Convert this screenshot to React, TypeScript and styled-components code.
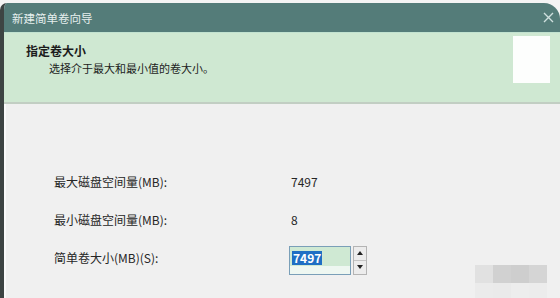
import React from "react";
import styled, { createGlobalStyle } from "styled-components";

const GlobalStyle = createGlobalStyle`
  html, body {
    margin: 0;
    padding: 0;
    background: #f4f4f4;
    font-family: "Noto Sans CJK SC", "Noto Sans", sans-serif;
  }
`;

const Screen = styled.div`
  position: relative;
  width: 560px;
  height: 298px;
  padding-top: 3px;
  box-sizing: border-box;
  overflow: hidden;
`;

const Window = styled.div`
  height: 100%;
  display: flex;
  flex-direction: column;
  border-left: 4px solid #3d4443;
  border-radius: 7px 16px 0 0;
  background: #f0f0f0;
  overflow: hidden;
`;

const TitleBar = styled.div`
  height: 29px;
  display: flex;
  align-items: center;
  justify-content: space-between;
  padding: 0 6px 0 8px;
  background: #547c79;
  color: #e6efee;
  font-size: 11.5px;
`;

const CloseIcon = styled.svg`
  width: 11px;
  height: 11px;
  margin-top: 0px;
`;

const Header = styled.div`
  height: 72px;
  display: flex;
  justify-content: space-between;
  align-items: flex-start;
  background: #cfe8d2;
  border-top: 1px solid #c2e2d0;
  border-bottom: 2px solid #c2cec3;
  box-sizing: border-box;
`;

const HeaderText = styled.div`
  padding: 10px 0 0 22px;
  color: #1c1c1c;
`;

const HeaderTitle = styled.div`
  font-size: 12px;
  font-weight: 700;
  line-height: 16px;
`;

const HeaderSub = styled.div`
  font-size: 11px;
  line-height: 16px;
  margin: 1px 0 0 23px;
`;

const Badge = styled.div`
  width: 37px;
  height: 47px;
  margin: 3px 10px 0 0;
  background: #fdfefd;
`;

const Body = styled.div`
  flex: 1;
  padding: 58px 0 0 48px;
  border-left: 2px solid #fafafa;
  display: flex;
  flex-direction: column;
`;

const Row = styled.div`
  height: 38px;
  display: flex;
  align-items: center;
  font-size: 12px;
  color: #262626;
`;

const Label = styled.div`
  width: 237px;
`;

const SpinBox = styled.div`
  display: flex;
  margin-top: 6px;
  margin-left: -2px;
`;

const InputField = styled.div`
  width: 62px;
  height: 29px;
  border: 1px solid #7a9fb8;
  background: linear-gradient(#cfe9d3 0 70%, #eef7f1 70% 100%);
  padding: 2px 0 0 2px;
  box-sizing: border-box;
`;

const Selected = styled.span`
  display: inline-block;
  background: #1f6fc4;
  color: #ffffff;
  font-size: 12px;
  font-weight: 600;
  line-height: 14px;
  padding: 0 1px;
`;

const Spinner = styled.div`
  display: flex;
  flex-direction: column;
  margin-left: 2px;
  border: 1px solid #b4b4b4;
  height: 29px;
  box-sizing: border-box;
`;

const SpinButton = styled.div`
  width: 12px;
  flex: 1;
  display: flex;
  align-items: center;
  justify-content: center;
  background: #ececec;
  & + & {
    border-top: 1px solid #c4c4c4;
  }
`;

const Mosaic = styled.div`
  position: absolute;
  right: 13px;
  bottom: 0;
  display: grid;
  grid-template-columns: repeat(4, 18px);
  grid-template-rows: 18px 15px;
`;

const Tile = styled.div<{ $c: string }>`
  background: ${({ $c }) => $c};
`;

const tiles = ["#e1e1e1", "#d1d1d1", "#cecece", "#d5d5d5", "#ebebeb", "#eaeaea", "#ededed", "#ececec"];

function Arrow({ up }: { up?: boolean }) {
  return (
    <svg width="6" height="4" viewBox="0 0 6 4">
      <path d={up ? "M0 4 L3 0 L6 4 Z" : "M0 0 L3 4 L6 0 Z"} fill="#222" />
    </svg>
  );
}

export default function App() {
  return (
    <>
      <GlobalStyle />
      <Screen>
        <Window>
          <TitleBar>
            <span>新建简单卷向导</span>
            <CloseIcon viewBox="0 0 11 11">
              <path d="M1 1 L10 10 M10 1 L1 10" stroke="#cfe0de" strokeWidth="1.4" />
            </CloseIcon>
          </TitleBar>
          <Header>
            <HeaderText>
              <HeaderTitle>指定卷大小</HeaderTitle>
              <HeaderSub>选择介于最大和最小值的卷大小。</HeaderSub>
            </HeaderText>
            <Badge />
          </Header>
          <Body>
            <Row>
              <Label>最大磁盘空间量(MB):</Label>
              <span>7497</span>
            </Row>
            <Row>
              <Label>最小磁盘空间量(MB):</Label>
              <span>8</span>
            </Row>
            <Row>
              <Label>简单卷大小(MB)(S):</Label>
              <SpinBox>
                <InputField>
                  <Selected>7497</Selected>
                </InputField>
                <Spinner>
                  <SpinButton>
                    <Arrow up />
                  </SpinButton>
                  <SpinButton>
                    <Arrow />
                  </SpinButton>
                </Spinner>
              </SpinBox>
            </Row>
          </Body>
        </Window>
        <Mosaic>
          {tiles.map((c, i) => (
            <Tile key={i} $c={c} />
          ))}
        </Mosaic>
      </Screen>
    </>
  );
}
